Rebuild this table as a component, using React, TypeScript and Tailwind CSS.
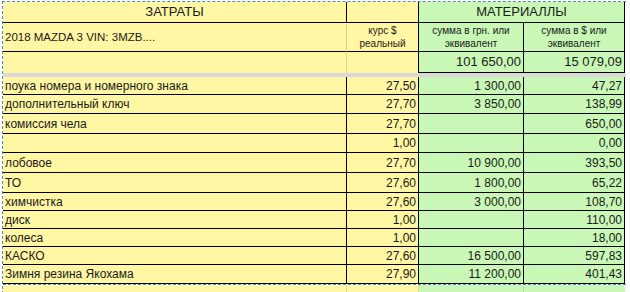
const rows = [
  { name: "поука номера и номерного знака", rate: "27,50", uah: "1 300,00", usd: "47,27", h: "h-[18px]" },
  { name: "дополнительный ключ", rate: "27,70", uah: "3 850,00", usd: "138,99", h: "h-[19px]" },
  { name: "комиссия чела", rate: "27,70", uah: "", usd: "650,00", h: "h-[20px]" },
  { name: "", rate: "1,00", uah: "", usd: "0,00", h: "h-[19px]" },
  { name: "лобовое", rate: "27,70", uah: "10 900,00", usd: "393,50", h: "h-[20px]" },
  { name: "ТО", rate: "27,60", uah: "1 800,00", usd: "65,22", h: "h-[20px]" },
  { name: "химчистка", rate: "27,60", uah: "3 000,00", usd: "108,70", h: "h-[18px]" },
  { name: "диск", rate: "1,00", uah: "", usd: "110,00", h: "h-[18px]" },
  { name: "колеса", rate: "1,00", uah: "", usd: "18,00", h: "h-[18px]" },
  { name: "КАСКО", rate: "27,60", uah: "16 500,00", usd: "597,83", h: "h-[18px]" },
  { name: "Зимня резина Якохама", rate: "27,90", uah: "11 200,00", usd: "401,43", h: "h-[19px]" },
];

const yellow = "bg-[#fff7a3]";
const green = "bg-[#c8f7b6]";
const c1 = "w-[344px] shrink-0";
const c2 = "w-[72px] shrink-0";
const c3 = "w-[105px] shrink-0";
const c4 = "w-[101px] shrink-0";
const cell = "box-border border-b border-r border-black flex items-center overflow-hidden";

export default function App() {
  return (
    <div className="w-[630px] h-[292px] bg-white overflow-hidden font-['Liberation_Sans',Arial,sans-serif] text-[#1a1a1a] leading-[14px]">
      <div className="ml-[2px] mt-[1px] border-l border-t border-dashed border-[#4f86c6] w-[624px]">
        {/* header row 1 */}
        <div className="flex h-[21px]">
          <div className={`${c1} ${yellow} ${cell} justify-center text-[13px]`}>ЗАТРАТЫ</div>
          <div className={`${c2} ${yellow} ${cell}`} />
          <div className={`w-[206px] shrink-0 ${green} ${cell} justify-center text-[13px]`}>МАТЕРИАЛЛЫ</div>
        </div>
        {/* header row 2 */}
        <div className="flex h-[29px]">
          <div className={`${c1} ${yellow} ${cell} border-r-[#d8cf80] pl-[2px] text-[11.5px]`}>2018 MAZDA 3 VIN: 3MZB....</div>
          <div className={`${c2} ${yellow} ${cell} justify-center text-center text-[10px] leading-[13px]`}>
            курс $<br />реальный
          </div>
          <div className={`${c3} ${green} ${cell} justify-center text-center text-[10px] leading-[13px]`}>
            сумма в грн. или<br />эквивалент
          </div>
          <div className={`${c4} ${green} ${cell} justify-center text-center text-[10px] leading-[13px]`}>
            сумма в $ или<br />эквивалент
          </div>
        </div>
        {/* header row 3 */}
        <div className="flex h-[21px]">
          <div className={`${c1} ${yellow} border-r border-[#e0d98a]`} />
          <div className={`${c2} ${yellow} border-r border-black`} />
          <div className={`${c3} ${green} ${cell} justify-end pr-[2px] text-[13px]`}>101 650,00</div>
          <div className={`${c4} ${green} ${cell} justify-end pr-[2px] text-[13px]`}>15 079,09</div>
        </div>
        <div className="h-[4px] bg-[#d9d9d9]" />
        {rows.map((r, i) => (
          <div key={i} className={`flex ${r.h}`}>
            <div className={`${c1} ${yellow} ${cell} pl-[2px] text-[12px]`}>{r.name}</div>
            <div className={`${c2} ${yellow} ${cell} justify-end pr-[2px] text-[12px]`}>{r.rate}</div>
            <div className={`${c3} ${green} ${cell} justify-end pr-[2px] text-[12px]`}>{r.uah}</div>
            <div className={`${c4} ${green} ${cell} justify-end pr-[2px] text-[12px]`}>{r.usd}</div>
          </div>
        ))}
        <div className="flex h-[10px] border-t border-dashed border-[#4f86c6]">
          <div className={`${c1} ${yellow} border-r border-[#e0d98a]`} />
          <div className={`${c2} ${yellow} border-r border-[#e0d98a]`} />
          <div className={`${c3} ${green} border-r border-[#b5dca5]`} />
          <div className={`${c4} ${green}`} />
        </div>
      </div>
    </div>
  );
}
